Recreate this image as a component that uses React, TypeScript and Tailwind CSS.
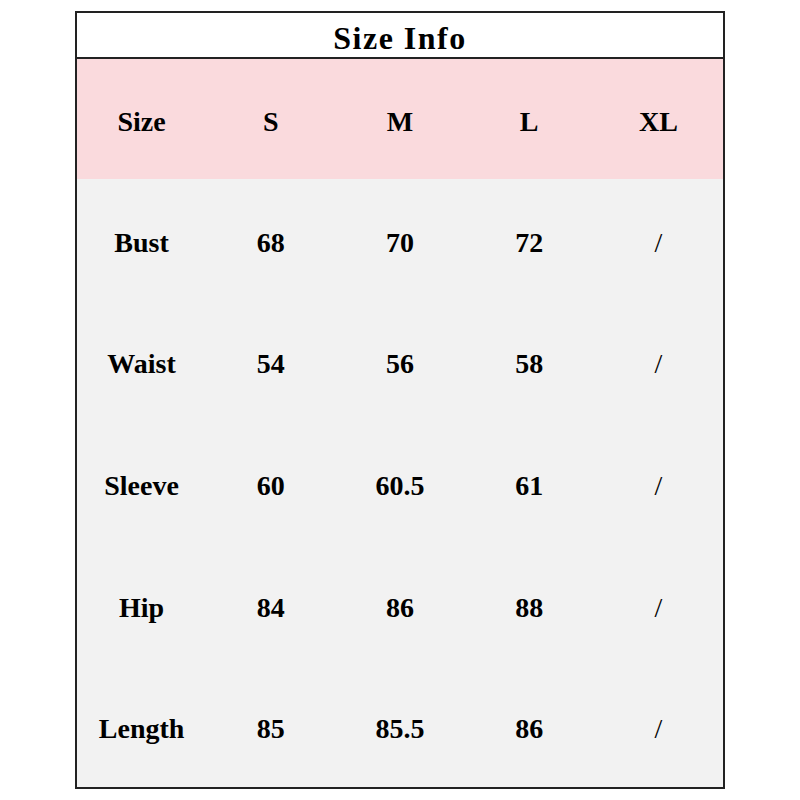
import React from 'react';

const sizes = ['S', 'M', 'L', 'XL'];

const rows = [
  { name: 'Bust', values: ['68', '70', '72', '/'] },
  { name: 'Waist', values: ['54', '56', '58', '/'] },
  { name: 'Sleeve', values: ['60', '60.5', '61', '/'] },
  { name: 'Hip', values: ['84', '86', '88', '/'] },
  { name: 'Length', values: ['85', '85.5', '86', '/'] },
];

const App = () => {
  return (
    <div className="w-[800px] h-[800px] bg-white pt-[11px] pl-[75px]" style={{ fontFamily: '"Liberation Serif", "Times New Roman", serif' }}>
      <div className="w-[650px] h-[778px] border-2 border-[#222] flex flex-col text-black font-bold">
        <div className="h-[46px] pt-[5px] border-b-2 border-[#222] flex items-center justify-center text-[32px] tracking-[1.5px]">
          Size Info
        </div>
        <div className="h-[120px] pt-[6px] bg-[#fadadd] grid grid-cols-5 items-center text-center text-[28px]">
          <div>Size</div>
          {sizes.map((s) => (
            <div key={s}>{s}</div>
          ))}
        </div>
        <div className="flex-1 bg-[#f2f2f2] flex flex-col">
          {rows.map((r) => (
            <div key={r.name} className="flex-1 pt-[6px] grid grid-cols-5 items-center text-center text-[28px]">
              <div>{r.name}</div>
              {r.values.map((v, i) => (
                <div key={i} className={v === '/' ? 'font-normal' : ''}>{v}</div>
              ))}
            </div>
          ))}
        </div>
      </div>
    </div>
  );
};

export default App;
